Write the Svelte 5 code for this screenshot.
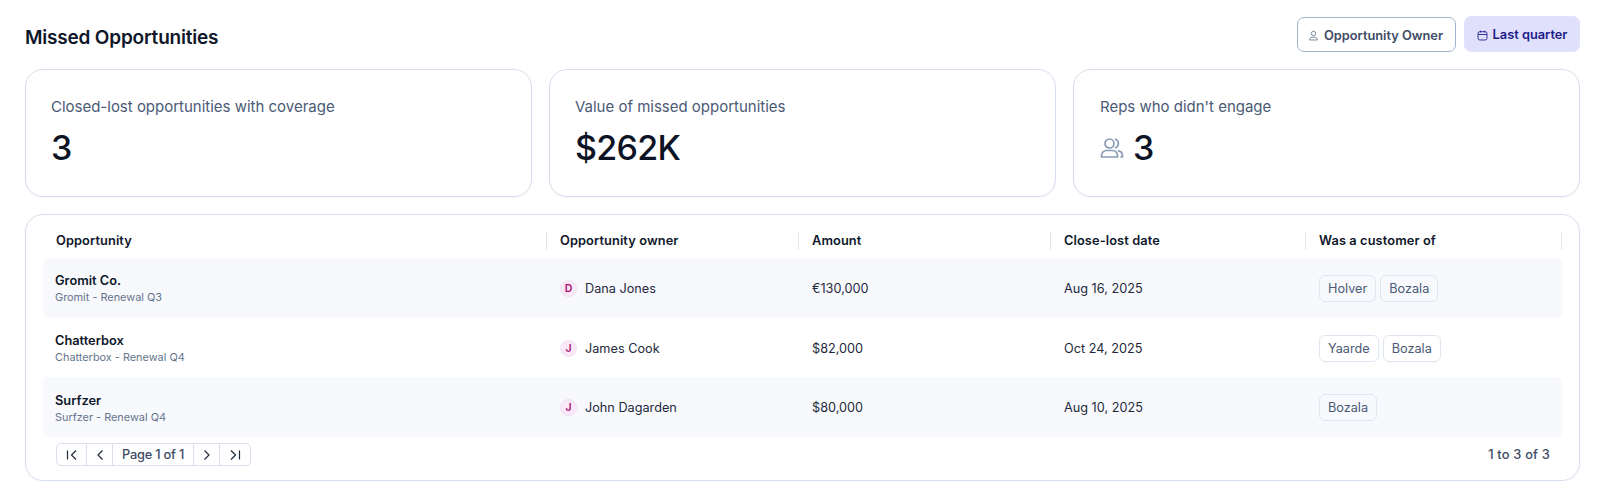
<script>
  const cards = [
    { label: 'Closed-lost opportunities with coverage', value: '3' },
    { label: 'Value of missed opportunities', value: '$262K' },
    { label: "Reps who didn't engage", value: '3', icon: true }
  ];
  const rows = [
    { name: 'Gromit Co.', sub: 'Gromit - Renewal Q3', initial: 'D', owner: 'Dana Jones', amount: '€130,000', date: 'Aug 16, 2025', tags: ['Holver', 'Bozala'] },
    { name: 'Chatterbox', sub: 'Chatterbox - Renewal Q4', initial: 'J', owner: 'James Cook', amount: '$82,000', date: 'Oct 24, 2025', tags: ['Yaarde', 'Bozala'] },
    { name: 'Surfzer', sub: 'Surfzer - Renewal Q4', initial: 'J', owner: 'John Dagarden', amount: '$80,000', date: 'Aug 10, 2025', tags: ['Bozala'] }
  ];
  const heads = ['Opportunity', 'Opportunity owner', 'Amount', 'Close-lost date', 'Was a customer of'];
</script>

<div class="page">
  <header class="top">
    <h1>Missed Opportunities</h1>
    <div class="filters">
      <button class="btn owner">
        <svg viewBox="0 0 16 16" width="11" height="11" fill="none" stroke="currentColor" stroke-width="1.2"><circle cx="8" cy="5" r="3.2"/><path d="M2.5 14.5v-.8c0-2 1.6-3.2 3.5-3.2h4c1.900 0 3.500 1.200 3.500 3.200v.8z"/></svg>
        Opportunity Owner
      </button>
      <button class="btn quarter">
        <svg viewBox="0 0 16 16" width="11" height="11" fill="none" stroke="currentColor" stroke-width="1.3"><rect x="1.500" y="2.500" width="13" height="12" rx="2.500"/><path d="M1.500 6.500h13M5 1v2.500M11 1v2.500"/></svg>
        Last quarter
      </button>
    </div>
  </header>

  <section class="cards">
    {#each cards as c}
      <div class="card">
        <div class="label">{c.label}</div>
        <div class="value">
          {#if c.icon}
            <svg class="people" viewBox="0 0 24 24" width="24" height="24" fill="none" stroke="#8a9bb5" stroke-width="1.700" stroke-linecap="round" stroke-linejoin="round"><circle cx="9.500" cy="7.500" r="4.500"/><path d="M1.500 21v-1.500c0-3 2.500-5 5-5h6c2.500 0 5 2 5 5V21z"/><path d="M15.500 3.300a4.500 4.500 0 0 1 0 8.400M18.500 14.800c2.400.5 4 2.400 4 4.700V21h-1.500"/></svg>
          {/if}
          <span>{c.value}</span>
        </div>
      </div>
    {/each}
  </section>

  <section class="panel">
    <div class="grid head">
      {#each heads as h}
        <div class="hcell">{h}</div>
      {/each}
    </div>
    {#each rows as r, i}
      <div class="grid row" class:alt={i % 2 === 0}>
        <div class="cell first">
          <div class="name">{r.name}</div>
          <div class="sub">{r.sub}</div>
        </div>
        <div class="cell ownercell">
          <span class="avatar">{r.initial}</span>
          <span>{r.owner}</span>
        </div>
        <div class="cell">{r.amount}</div>
        <div class="cell">{r.date}</div>
        <div class="cell tags">
          {#each r.tags as t}
            <span class="tag">{t}</span>
          {/each}
        </div>
      </div>
    {/each}
    <div class="foot">
      <div class="pager">
        <span class="pg edge"><svg viewBox="0 0 16 16" width="16" height="16" fill="none" stroke="#1e293b" stroke-width="1.200"><path d="M3.500 3.500v9M12 3.500 7.500 8l4.500 4.500"/></svg></span>
        <span class="pg arrow"><svg viewBox="0 0 16 16" width="16" height="16" fill="none" stroke="#1e293b" stroke-width="1.200"><path d="M10.500 3.500 6 8l4.500 4.500"/></svg></span>
        <span class="pg text">Page 1 of 1</span>
        <span class="pg arrow"><svg viewBox="0 0 16 16" width="16" height="16" fill="none" stroke="#1e293b" stroke-width="1.200"><path d="M5.500 3.500 10 8l-4.500 4.500"/></svg></span>
        <span class="pg edge last"><svg viewBox="0 0 16 16" width="16" height="16" fill="none" stroke="#1e293b" stroke-width="1.200"><path d="M12.500 3.500v9M4 3.500 8.500 8 4 12.500"/></svg></span>
      </div>
      <div class="count">1 to 3 of 3</div>
    </div>
  </section>
</div>

<style>
  :global(body) { margin: 0; background: #fff; }
  .page {
    font-family: Inter, "Liberation Sans", sans-serif;
    padding: 16px 20px 0 25px;
    color: #0f172a;
    -webkit-font-smoothing: antialiased;
  }
  .top { display: flex; justify-content: space-between; align-items: center; height: 36px; margin-bottom: 17px; }
  h1 { margin: 0; font-size: 19px; line-height: 28px; font-weight: 600; letter-spacing: -0.2px; color: #0f172a; padding-top: 7px; }
  .filters { display: flex; gap: 8px; align-items: center; }
  .btn {
    font-family: inherit; font-size: 12.800px; font-weight: 600; height: 36px;
    display: inline-flex; align-items: center; gap: 5px; border-radius: 7px; cursor: pointer; padding: 2px 2px 0 0;
    justify-content: center; box-sizing: border-box; line-height: 18px;
  }
  .owner { width: 159px; height: 35px; background: #fff; border: 1px solid #a3b3cf; color: #3d4b66; margin-top: 1px; }
  .owner svg { color: #64748b; }
  .quarter { width: 116px; background: #e0e0fd; border: 1px solid #e0e3fb; color: #1e1b8a; padding-right: 0; }
  .cards { display: grid; grid-template-columns: repeat(3, 1fr); gap: 17px; margin-bottom: 17px; }
  .card {
    height: 128px; box-sizing: border-box; border: 1px solid #d5deec; border-radius: 18px;
    padding: 27px 25px 0; box-shadow: 0 1px 2px rgba(15,23,42,.04);
  }
  .card:last-child { padding-left: 26px; }
  .label { font-size: 15px; line-height: 20px; color: #4a5a75; letter-spacing: -0.01px; }
  .value { display: flex; align-items: center; gap: 9px; font-size: 34px; line-height: 40px; font-weight: 500; margin-top: 11px; color: #0b1324; letter-spacing: -0.7px; }
  .people { margin-left: 0; }
  .panel {
    height: 267px; box-sizing: border-box; border: 1px solid #d5deec; border-radius: 18px;
    padding: 0 17px; box-shadow: 0 1px 2px rgba(15,23,42,.04);
  }
  .grid { display: grid; grid-template-columns: 504px 252px 252px 255px 1fr; }
  .head { height: 43px; align-items: center; padding-top: 9px; box-sizing: border-box; padding-bottom: 1px; }
  .hcell {
    height: 18px; line-height: 18px; font-size: 12.800px; font-weight: 600; letter-spacing: 0.1px; color: #0f172a;
    border-right: 1px solid #e2e6ec; padding-left: 13px; box-sizing: border-box;
  }
  .row { height: 59.700px; align-items: center; font-size: 12.700px; color: #1e293b; }
  .row.alt { background: #f8f9fd; border-radius: 5px; }
  .cell { padding-left: 13px; padding-top: 1px; }
  .first { padding-left: 12px; padding-top: 2px; }
  .name { font-size: 12.800px; font-weight: 600; line-height: 17px; color: #0f172a; }
  .sub { font-size: 10.900px; line-height: 16px; color: #64748b; }
  .ownercell { display: flex; align-items: center; gap: 8px; }
  .avatar {
    width: 17px; height: 17px; box-sizing: border-box; border-radius: 50%; background: #fae8f8; border: 1px solid #eee3f3;
    color: #a3106e; font-size: 10.500px; font-weight: 600; display: flex; align-items: center; justify-content: center;
  }
  .tags { display: flex; gap: 4px; }
  .tag {
    height: 27px; box-sizing: border-box; border: 1px solid #dfe5f0; border-radius: 6px; padding: 0 8px;
    display: flex; align-items: center; font-size: 12.700px; color: #4a5a75;
  }
  .foot { display: flex; justify-content: space-between; align-items: center; padding: 6px 12px 0 13px; }
  .pager { display: flex; height: 23px; box-sizing: border-box; border: 1px solid #d9e0ec; border-radius: 5px; }
  .pg { display: flex; align-items: center; justify-content: center; border-right: 1px solid #d9e0ec; box-sizing: border-box; }
  .pg:last-child { border-right: 0; }
  .edge { width: 30px; }
  .arrow { width: 26px; }
  .text { width: 81px; font-size: 12.800px; font-weight: 500; color: #3d4b66; letter-spacing: -0.2px; }
  .count { font-size: 12.800px; font-weight: 500; color: #3d4b66; letter-spacing: 0.2px; }
</style>
